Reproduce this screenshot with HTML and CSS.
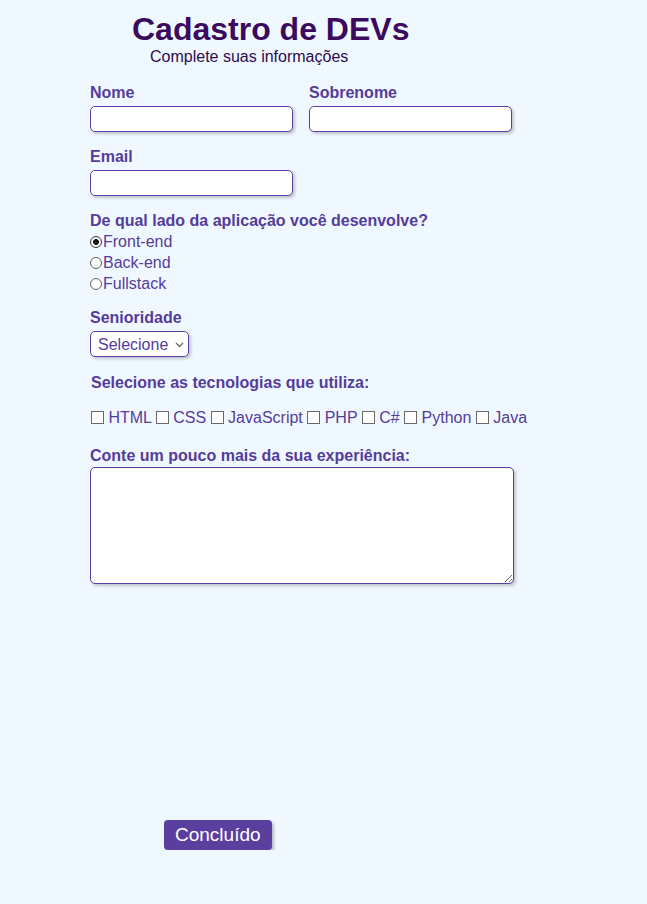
FILE: index.html
```html
<!DOCTYPE html>
<html lang="pt-BR">
<head>
<meta charset="utf-8">
<title>Cadastro de DEVs</title>
<link rel="stylesheet" href="styles.css">
</head>
<body>
<main class="page">
  <header class="header">
    <h1 class="title">Cadastro de DEVs</h1>
    <p class="subtitle">Complete suas informações</p>
  </header>
  <form class="form">
    <div class="row">
      <div class="field">
        <label class="label" for="nome">Nome</label>
        <input class="input" id="nome" type="text">
      </div>
      <div class="field">
        <label class="label" for="sobrenome">Sobrenome</label>
        <input class="input" id="sobrenome" type="text">
      </div>
    </div>
    <div class="field">
      <label class="label" for="email">Email</label>
      <input class="input" id="email" type="email">
    </div>
    <div class="field group">
      <span class="label">De qual lado da aplicação você desenvolve?</span>
      <label class="radio"><input type="radio" name="lado" checked>Front-end</label>
      <label class="radio"><input type="radio" name="lado">Back-end</label>
      <label class="radio"><input type="radio" name="lado">Fullstack</label>
    </div>
    <div class="field">
      <label class="label" for="senioridade">Senioridade</label>
      <span class="select-wrap">
        <select class="select" id="senioridade">
          <option>Selecione</option>
        </select>
        <svg class="chevron" width="9" height="6" viewBox="0 0 9 6" aria-hidden="true"><path d="M1 1l3.5 3.5L8 1" fill="none" stroke="#6b6b6b" stroke-width="1.3"/></svg>
      </span>
    </div>
    <div class="techs">
      <p class="label techs-title">Selecione as tecnologias que utiliza:</p>
      <div class="checks">
        <label class="check"><input type="checkbox"> HTML</label>
        <label class="check"><input type="checkbox"> CSS</label>
        <label class="check"><input type="checkbox"> JavaScript</label>
        <label class="check"><input type="checkbox"> PHP</label>
        <label class="check"><input type="checkbox"> C#</label>
        <label class="check"><input type="checkbox"> Python</label>
        <label class="check"><input type="checkbox"> Java</label>
      </div>
    </div>
    <div class="field">
      <label class="label exp-label" for="exp">Conte um pouco mais da sua experiência:</label>
      <textarea class="textarea" id="exp"></textarea>
    </div>
    <div class="actions">
      <button class="button" type="button">Concluído</button>
    </div>
  </form>
</main>
</body>
</html>
```
FILE: styles.css
```css
html, body {
  margin: 0;
  padding: 0;
  background: #f0f8ff;
}
body {
  font-family: "Liberation Sans", Arial, sans-serif;
  font-size: 16px;
  color: #553c9a;
}
.page {
  padding-left: 90px;
  width: 424px;
}
.header {
  padding-top: 11px;
}
.title {
  margin: 0 0 0 42px;
  font-size: 32px;
  line-height: 37px;
  font-weight: bold;
  color: #3b0a5e;
}
.subtitle {
  margin: 0 0 0 60px;
  line-height: 18px;
  color: #2d0b4f;
}
.form {
  display: flex;
  flex-direction: column;
  margin-top: 18px;
}
.row {
  display: flex;
  gap: 16px;
}
.field {
  display: flex;
  flex-direction: column;
  align-items: flex-start;
  margin-bottom: 16px;
}
.label {
  font-weight: bold;
  line-height: 18px;
  margin-bottom: 4px;
}
.input {
  box-sizing: border-box;
  width: 203px;
  height: 26px;
  margin: 0;
  border: 1.5px solid #5b3fa6;
  border-radius: 5px;
  background: #fff;
  box-shadow: 2px 2px 3px rgba(0, 0, 0, 0.2);
}
.group .label {
  margin-bottom: 1px;
}
.group {
  margin-bottom: 15px;
}
.radio {
  display: flex;
  align-items: center;
  line-height: 21px;
}
.radio input {
  appearance: none;
  -webkit-appearance: none;
  box-sizing: border-box;
  margin: 0 1px 0 0;
  width: 12px;
  height: 12px;
  border: 1px solid #5f5f5f;
  border-radius: 50%;
  background: #fff;
}
.radio input:checked {
  border-color: #333;
  background: radial-gradient(circle, #111 0 2.6px, #fff 3.2px);
}
.select-wrap {
  position: relative;
  display: flex;
}
.select {
  appearance: none;
  -webkit-appearance: none;
  box-sizing: border-box;
  width: 99px;
  height: 26px;
  margin: 0;
  padding: 0 18px 0 7px;
  font-family: inherit;
  font-size: 16px;
  color: #553c9a;
  border: 1.5px solid #5b3fa6;
  border-radius: 5px;
  background: #fff;
  box-shadow: 2px 2px 3px rgba(0, 0, 0, 0.2);
}
.chevron {
  position: absolute;
  right: 5px;
  top: 11px;
  pointer-events: none;
}
.techs {
  margin-top: 1px;
  padding-left: 1px;
}
.techs-title {
  margin: 0;
}
.checks {
  margin-top: 17px;
  margin-bottom: 20px;
  line-height: 18px;
  white-space: nowrap;
}
.check input {
  appearance: none;
  -webkit-appearance: none;
  box-sizing: border-box;
  width: 13px;
  height: 13px;
  margin: 0;
  vertical-align: -1px;
  border: 1px solid #6a6a6a;
  background: #fff;
}
.exp-label {
  margin-bottom: 2px;
}
.textarea {
  box-sizing: border-box;
  width: 424px;
  height: 117px;
  margin: 0;
  border: 1.5px solid #5b3fa6;
  border-radius: 5px;
  background: #fff;
  box-shadow: 2px 2px 3px rgba(0, 0, 0, 0.2);
}
.actions {
  margin-top: 220px;
  padding-left: 74px;
}
.button {
  height: 30px;
  padding: 0 11px;
  font-family: inherit;
  font-size: 19px;
  color: #fff;
  background: #5a3f9e;
  border: none;
  border-radius: 4px;
  box-shadow: 2px 2px 3px rgba(0, 0, 0, 0.25);
}
```
